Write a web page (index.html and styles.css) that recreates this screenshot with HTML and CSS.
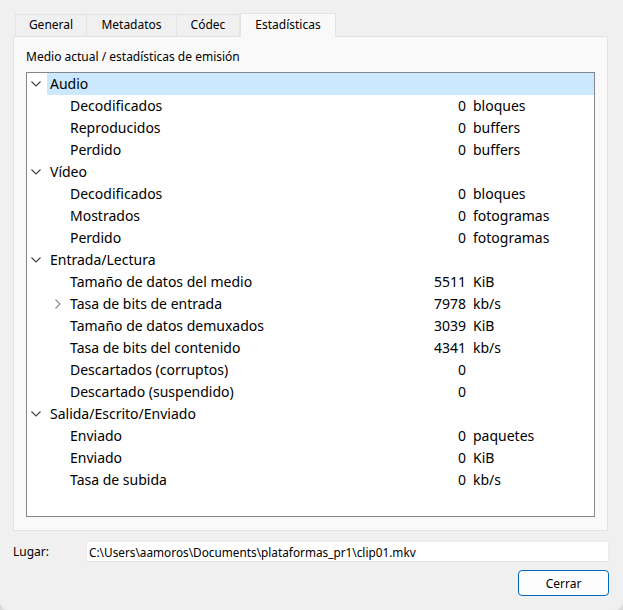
FILE: index.html
```html
<!DOCTYPE html>
<html lang="es">
<head>
<meta charset="utf-8">
<title>Información multimedia</title>
<link rel="stylesheet" href="styles.css">
</head>
<body>
<div class="window">
  <div class="tabs">
    <div class="tab t-general">General</div>
    <div class="tab t-meta">Metadatos</div>
    <div class="tab t-codec">Códec</div>
    <div class="tab active t-stats">Estadísticas</div>
  </div>
  <div class="panel">
    <div class="caption">Medio actual / estadísticas de emisión</div>
    <div class="tree">
      <div class="row l1 selected"><span class="br"><svg width="10" height="6" viewBox="0 0 10 6"><path d="M0.5 0.5 L5 5 L9.5 0.5" fill="none" stroke="#404040" stroke-width="1.1"/></svg></span><span class="cell"><span class="name">Audio</span><span class="num"></span><span class="unit"></span></span></div>
      <div class="row l2"><span class="br"></span><span class="br"></span><span class="cell"><span class="name">Decodificados</span><span class="num">0</span><span class="unit">bloques</span></span></div>
      <div class="row l2"><span class="br"></span><span class="br"></span><span class="cell"><span class="name">Reproducidos</span><span class="num">0</span><span class="unit">buffers</span></span></div>
      <div class="row l2"><span class="br"></span><span class="br"></span><span class="cell"><span class="name">Perdido</span><span class="num">0</span><span class="unit">buffers</span></span></div>
      <div class="row l1"><span class="br"><svg width="10" height="6" viewBox="0 0 10 6"><path d="M0.5 0.5 L5 5 L9.5 0.5" fill="none" stroke="#404040" stroke-width="1.1"/></svg></span><span class="cell"><span class="name">Vídeo</span><span class="num"></span><span class="unit"></span></span></div>
      <div class="row l2"><span class="br"></span><span class="br"></span><span class="cell"><span class="name">Decodificados</span><span class="num">0</span><span class="unit">bloques</span></span></div>
      <div class="row l2"><span class="br"></span><span class="br"></span><span class="cell"><span class="name">Mostrados</span><span class="num">0</span><span class="unit">fotogramas</span></span></div>
      <div class="row l2"><span class="br"></span><span class="br"></span><span class="cell"><span class="name">Perdido</span><span class="num">0</span><span class="unit">fotogramas</span></span></div>
      <div class="row l1"><span class="br"><svg width="10" height="6" viewBox="0 0 10 6"><path d="M0.5 0.5 L5 5 L9.5 0.5" fill="none" stroke="#404040" stroke-width="1.1"/></svg></span><span class="cell"><span class="name">Entrada/Lectura</span><span class="num"></span><span class="unit"></span></span></div>
      <div class="row l2"><span class="br"></span><span class="br"></span><span class="cell"><span class="name">Tamaño de datos del medio</span><span class="num">5511</span><span class="unit">KiB</span></span></div>
      <div class="row l2"><span class="br"></span><span class="br br2"><svg width="6" height="10" viewBox="0 0 6 10"><path d="M0.5 0.5 L5 5 L0.5 9.5" fill="none" stroke="#8a8a8a" stroke-width="1.1"/></svg></span><span class="cell"><span class="name">Tasa de bits de entrada</span><span class="num">7978</span><span class="unit">kb/s</span></span></div>
      <div class="row l2"><span class="br"></span><span class="br"></span><span class="cell"><span class="name">Tamaño de datos demuxados</span><span class="num">3039</span><span class="unit">KiB</span></span></div>
      <div class="row l2"><span class="br"></span><span class="br"></span><span class="cell"><span class="name">Tasa de bits del contenido</span><span class="num">4341</span><span class="unit">kb/s</span></span></div>
      <div class="row l2"><span class="br"></span><span class="br"></span><span class="cell"><span class="name">Descartados (corruptos)</span><span class="num">0</span><span class="unit"></span></span></div>
      <div class="row l2"><span class="br"></span><span class="br"></span><span class="cell"><span class="name">Descartado (suspendido)</span><span class="num">0</span><span class="unit"></span></span></div>
      <div class="row l1"><span class="br"><svg width="10" height="6" viewBox="0 0 10 6"><path d="M0.5 0.5 L5 5 L9.5 0.5" fill="none" stroke="#404040" stroke-width="1.1"/></svg></span><span class="cell"><span class="name">Salida/Escrito/Enviado</span><span class="num"></span><span class="unit"></span></span></div>
      <div class="row l2"><span class="br"></span><span class="br"></span><span class="cell"><span class="name">Enviado</span><span class="num">0</span><span class="unit">paquetes</span></span></div>
      <div class="row l2"><span class="br"></span><span class="br"></span><span class="cell"><span class="name">Enviado</span><span class="num">0</span><span class="unit">KiB</span></span></div>
      <div class="row l2"><span class="br"></span><span class="br"></span><span class="cell"><span class="name">Tasa de subida</span><span class="num">0</span><span class="unit">kb/s</span></span></div>
    </div>
  </div>
  <div class="location">
    <span class="loc-label">Lugar:</span>
    <div class="loc-field">C:\Users\aamoros\Documents\plataformas_pr1\clip01.mkv</div>
  </div>
  <div class="actions">
    <button class="btn" type="button">Cerrar</button>
  </div>
</div>
</body>
</html>
```
FILE: styles.css
```css
html {
  background: #d9d9d9;
}
body {
  margin: 0;
  font-family: "Noto Sans", "Open Sans", sans-serif;
  font-size: 12px;
  color: #000;
}
.window {
  background: #f0f0f0;
  width: 623px;
  height: 610px;
  box-sizing: border-box;
  padding: 13px 14px 0 13px;
  border-bottom-right-radius: 8px;
  border-bottom-left-radius: 8px;
}
.tabs {
  display: flex;
  align-items: flex-end;
  height: 23px;
  padding-left: 2px;
}
.tab {
  box-sizing: border-box;
  height: 22px;
  line-height: 20px;
  text-align: center;
  border: 1px solid #e3e3e3;
  border-bottom: none;
  border-right: none;
  background: #f0f0f0;
  color: #000;
}
.t-general { width: 71px; }
.t-meta { width: 90px; }
.t-codec { width: 64px; border-right: 1px solid #e3e3e3; }
.t-stats { width: 96px; }
.tab.active {
  height: 24px;
  line-height: 21px;
  background: #f9f9f9;
  border: 1px solid #e3e3e3;
  border-bottom: none;
  margin-bottom: -1px;
  position: relative;
  z-index: 1;
}
.panel {
  margin-right: 1px;
  height: 495px;
  box-sizing: border-box;
  border: 1px solid #e3e3e3;
  background: #f9f9f9;
  padding: 12px 12px 0 12px;
}
.caption {
  line-height: 16px;
  height: 16px;
  margin-bottom: 7px;
}
.tree {
  box-sizing: border-box;
  width: 569px;
  height: 445px;
  border: 1px solid #828790;
  background: #fff;
  font-size: 14px;
}
.row {
  display: flex;
  height: 22px;
  line-height: 22px;
}
.br {
  width: 20px;
  flex: none;
  display: flex;
  align-items: center;
  justify-content: center;
}
.br svg { display: block; }
.row.l1 .br { justify-content: flex-start; padding-left: 4px; box-sizing: border-box; }
.br2 { justify-content: flex-start !important; padding-left: 8px; box-sizing: border-box; }
.cell {
  flex: 1;
  display: flex;
  padding-left: 3px;
}
.row.selected .cell {
  background: #cce8ff;
}
.name {
  flex: 1;
  white-space: nowrap;
}
.num {
  width: 60px;
  text-align: right;
}
.unit {
  width: 121px;
  padding-left: 7px;
}
.location {
  display: flex;
  align-items: center;
  margin-top: 10px;
  height: 21px;
}
.loc-label {
  width: 73px;
  flex: none;
}
.loc-field {
  flex: 1;
  height: 21px;
  line-height: 20px;
  box-sizing: border-box;
  background: #fff;
  border: 1px solid #ececec;
  border-bottom-color: #e0e0e0;
  padding-left: 2px;
  white-space: nowrap;
  font-size: 11.8px;
}
.actions {
  display: flex;
  justify-content: flex-end;
  margin-top: 8px;
}
.btn {
  width: 91px;
  height: 26px;
  border: 1px solid #0067c0;
  border-radius: 4px;
  background: #fdfdfd;
  font-family: inherit;
  font-size: 12px;
  color: #000;
  padding: 0;
}
```
